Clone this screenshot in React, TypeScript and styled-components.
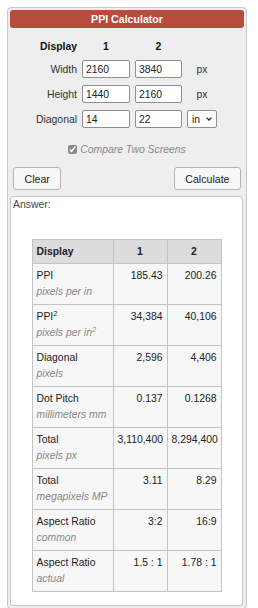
import React, { FC } from 'react';
import styled, { createGlobalStyle } from 'styled-components';

const GlobalStyle = createGlobalStyle`
  html, body {
    margin: 0;
    padding: 0;
    background: #fff;
    overflow: hidden;
  }

  body {
    font-family: 'Liberation Sans', Arial, sans-serif;
    font-size: 10.4px;
    color: #222;
  }
`;

const Panel = styled.div`
  width: 240px;
  box-sizing: border-box;
  margin: 7px 0 0 7px;
  padding: 2px;
  border: 1px solid #c9c9c9;
  border-radius: 4px;
  background-color: #eeeeee;
`;

const Title = styled.div`
  height: 18px;
  line-height: 18px;
  border-radius: 3px;
  background-color: #b84b3c;
  color: #fff;
  font-weight: bold;
  font-size: 10.6px;
  text-align: center;
`;

const FormGrid = styled.div`
  display: grid;
  grid-template-columns: 67px 48px 47px 30px;
  column-gap: 5px;
  row-gap: 7px;
  align-items: center;
  margin-top: 13px;
`;

const HeadCell = styled.div<{ $align?: string }>`
  line-height: 12px;
  font-weight: bold;
  color: #111;
  text-align: ${(props) => props.$align || 'center'};
`;

const Label = styled.label`
  text-align: right;
  color: #333;
`;

const Input = styled.input`
  width: 100%;
  height: 18px;
  box-sizing: border-box;
  padding: 0 3px;
  border: 1px solid #8f8f8f;
  border-radius: 2px;
  font: inherit;
  color: #222;
  background: #fff;
`;

const Unit = styled.span`
  text-align: center;
  color: #333;
`;

const SelectWrap = styled.span`
  position: relative;
  display: block;
  width: 30px;
  height: 18px;

  svg {
    position: absolute;
    right: 5px;
    top: 7px;
    pointer-events: none;
  }
`;

const Select = styled.select`
  appearance: none;
  width: 30px;
  height: 18px;
  box-sizing: border-box;
  padding: 0 0 0 4px;
  border: 1px solid #8f8f8f;
  border-radius: 2px;
  font: inherit;
  color: #222;
  background: #fff;
`;

const CheckRow = styled.label`
  display: flex;
  justify-content: center;
  align-items: center;
  margin-top: 15px;
  line-height: 13px;
  font-style: italic;
  color: #888;

  input {
    width: 9px;
    height: 9px;
    margin: 0 3px 0 0;
    accent-color: #8a8a8a;
  }
`;

const ButtonRow = styled.div`
  display: flex;
  justify-content: space-between;
  padding: 0 3px;
  margin-top: 11px;
`;

const Button = styled.button`
  height: 23px;
  padding: 0 10.5px;
  border: 1px solid #b5b5b5;
  border-radius: 3px;
  background-color: #f7f7f7;
  font: inherit;
  font-size: 10.6px;
  color: #222;
`;

const AnswerBox = styled.div`
  margin: 6px 1px 0 0;
  padding: 2px 2px 13px;
  border: 1px solid #c6c6c6;
  border-radius: 3px;
  background-color: #fff;
`;

const AnswerLabel = styled.div`
  line-height: 12px;
  color: #444;
`;

const Table = styled.table`
  width: 189px;
  margin: 28px auto 0;
  border-collapse: collapse;
  table-layout: fixed;

  th,
  td {
    border: 1px solid #c4c4c4;
    padding: 3.5px 4px;
    line-height: 16.5px;
    vertical-align: top;
  }

  th {
    padding: 3px 4px;
    line-height: 17px;
    background-color: #dcdcdc;
    color: #222;
    text-align: center;
  }

  th:first-child {
    text-align: left;
  }

  td {
    background-color: #f7f7f7;
    color: #222;
  }
`;

const Num = styled.td`
  text-align: right;
`;

const Sub = styled.div`
  font-style: italic;
  color: #888;
  white-space: nowrap;
`;

const Sup = styled.sup`
  font-size: 0.72em;
  line-height: 0;
`;

type Row = {
  name: React.ReactNode;
  unit: React.ReactNode;
  a: string;
  b: string;
};

const rows: Row[] = [
  { name: 'PPI', unit: 'pixels per in', a: '185.43', b: '200.26' },
  {
    name: (
      <>
        PPI<Sup>2</Sup>
      </>
    ),
    unit: (
      <>
        pixels per in<Sup>2</Sup>
      </>
    ),
    a: '34,384',
    b: '40,106',
  },
  { name: 'Diagonal', unit: 'pixels', a: '2,596', b: '4,406' },
  { name: 'Dot Pitch', unit: 'millimeters mm', a: '0.137', b: '0.1268' },
  { name: 'Total', unit: 'pixels px', a: '3,110,400', b: '8,294,400' },
  { name: 'Total', unit: 'megapixels MP', a: '3.11', b: '8.29' },
  { name: 'Aspect Ratio', unit: 'common', a: '3:2', b: '16:9' },
  { name: 'Aspect Ratio', unit: 'actual', a: '1.5 : 1', b: '1.78 : 1' },
];

const App: FC = () => {
  return (
    <>
      <GlobalStyle />
      <Panel>
        <Title>PPI Calculator</Title>

        <FormGrid>
          <HeadCell $align="right">Display</HeadCell>
          <HeadCell>1</HeadCell>
          <HeadCell>2</HeadCell>
          <span />

          <Label>Width</Label>
          <Input defaultValue="2160" />
          <Input defaultValue="3840" />
          <Unit>px</Unit>

          <Label>Height</Label>
          <Input defaultValue="1440" />
          <Input defaultValue="2160" />
          <Unit>px</Unit>

          <Label>Diagonal</Label>
          <Input defaultValue="14" />
          <Input defaultValue="22" />
          <SelectWrap>
            <Select defaultValue="in">
              <option value="in">in</option>
              <option value="cm">cm</option>
            </Select>
            <svg width="6" height="4" viewBox="0 0 6 4">
              <path d="M0.6 0.6 L3 3 L5.4 0.6" fill="none" stroke="#222" strokeWidth="1.3" />
            </svg>
          </SelectWrap>
        </FormGrid>

        <CheckRow>
          <input type="checkbox" defaultChecked />
          Compare Two Screens
        </CheckRow>

        <ButtonRow>
          <Button>Clear</Button>
          <Button>Calculate</Button>
        </ButtonRow>

        <AnswerBox>
          <AnswerLabel>Answer:</AnswerLabel>
          <Table>
            <colgroup>
              <col style={{ width: 81 }} />
              <col style={{ width: 54 }} />
              <col style={{ width: 54 }} />
            </colgroup>
            <thead>
              <tr>
                <th>Display</th>
                <th>1</th>
                <th>2</th>
              </tr>
            </thead>
            <tbody>
              {rows.map((row, i) => (
                <tr key={i}>
                  <td>
                    {row.name}
                    <Sub>{row.unit}</Sub>
                  </td>
                  <Num>{row.a}</Num>
                  <Num>{row.b}</Num>
                </tr>
              ))}
            </tbody>
          </Table>
        </AnswerBox>
      </Panel>
    </>
  );
};

export default App;
